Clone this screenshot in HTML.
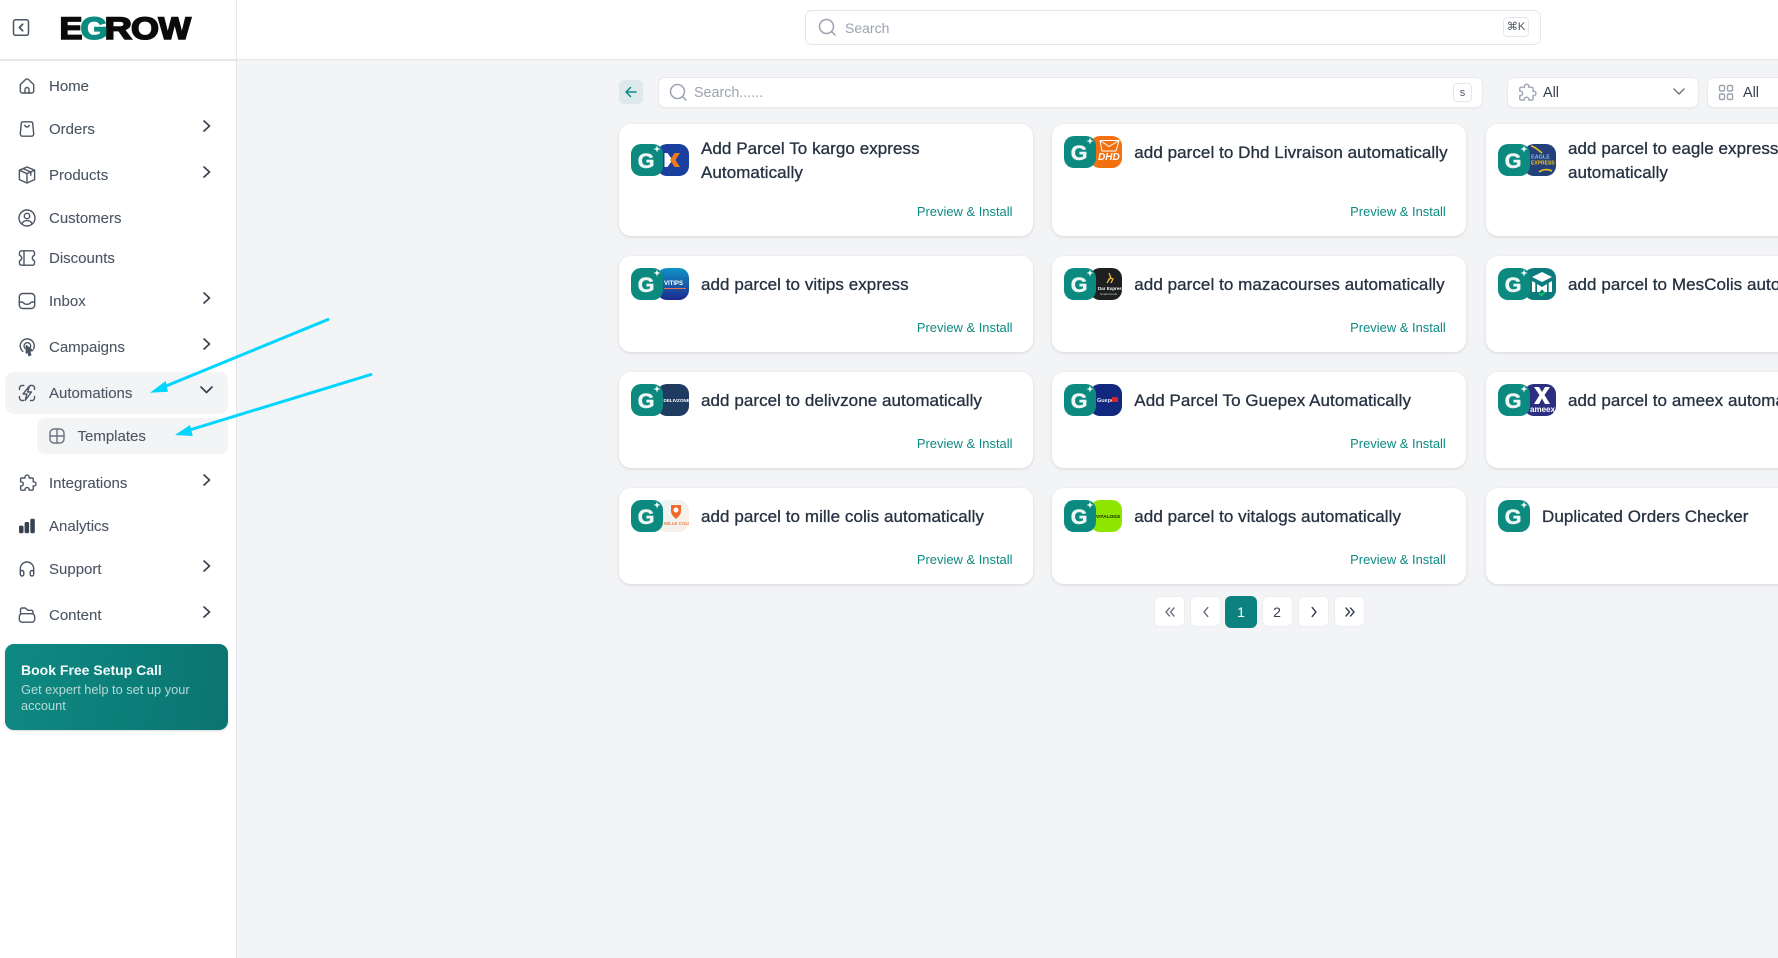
<!DOCTYPE html>
<html lang="en">
<head>
<meta charset="utf-8">
<title>Egrow Templates</title>
<style>
*{box-sizing:border-box;margin:0;padding:0}
html,body{width:1778px;height:958px;overflow:hidden;background:#f3f4f6;font-family:"Liberation Sans","DejaVu Sans",sans-serif}
.abs,.nav,.chev,.card,.pg,.ni{position:absolute}
#side{position:absolute;left:0;top:0;width:237px;height:958px;background:#fff;border-right:1.5px solid #e5e7eb}
#top{position:absolute;left:0;top:0;width:1778px;height:60px;background:#fff;border-bottom:1.5px solid #e5e7eb}
.nav{left:49px;height:20px;line-height:22px;font-size:15px;color:#4b5563;white-space:nowrap;-webkit-text-stroke:.1px #4b5563}
.ni{left:17px;width:20px;height:20px;fill:none;stroke:#4b5563;stroke-width:1.4;stroke-linecap:round;stroke-linejoin:round}
.chev{left:201px;width:12px;height:14px;fill:none;stroke:#374151;stroke-width:1.7;stroke-linecap:round;stroke-linejoin:round}
.box{position:absolute;background:#fff;border:1px solid #e8eaee;border-radius:7px;box-shadow:0 1px 1px rgba(0,0,0,.03)}
.kbd{position:absolute;background:#fff;border:1px solid #e5e7eb;border-radius:4px;text-align:center;color:#4b5563;font-size:11px}
.ph{position:absolute;color:#9ca3af;white-space:nowrap}
.card{width:413.5px;background:#fff;border-radius:12px;box-shadow:0 1px 3px rgba(0,0,0,.12)}
.card svg{position:absolute;left:12px}
.t{position:absolute;left:82px;line-height:24px;font-size:17px;letter-spacing:.06px;color:#263241;-webkit-text-stroke:.3px #263241;white-space:nowrap;margin-top:1px}
.p{position:absolute;right:20px;line-height:16px;font-size:12.95px;color:#0d8a82;white-space:nowrap;margin-top:1px}
.pg{top:596px;width:31px;height:31px;background:#fff;border:1px solid #eceef1;border-radius:6px;text-align:center;line-height:31px;font-size:14px;color:#374151}
.pg svg{position:absolute;left:8px;top:8px;width:14px;height:14px;fill:none;stroke-width:1.4;stroke-linecap:round;stroke-linejoin:round}
.g{font-family:"Liberation Sans",sans-serif;font-weight:700;font-size:21.5px;fill:#eef7f6;stroke:#eef7f6;stroke-width:.5}
.s{font-family:"Liberation Sans",sans-serif;font-weight:700}
.lg{font-family:"Liberation Sans",sans-serif;font-weight:700;font-size:31.3px;stroke-width:1.6;stroke-linejoin:miter}
</style>
</head>
<body>

<div id="top"></div>
<div id="side"></div>
<div class="abs" style="left:0;top:59px;width:237px;height:1.5px;background:#e5e7eb"></div>

<!-- collapse icon -->
<svg class="abs" style="left:12px;top:18px" width="18" height="19" viewBox="0 0 18 19" fill="none" stroke="#4b5563" stroke-width="1.5" stroke-linecap="round" stroke-linejoin="round"><rect x="1.5" y="1.8" width="15" height="15.5" rx="2"/><path d="M10.6 6.3 7.400 9.500l3.200 3.200" stroke-width="1.800"/></svg>

<!-- logo -->
<svg class="abs" style="left:50px;top:8px" width="160" height="40" viewBox="50 8 160 40">
<text class="lg" x="59.5" y="39.2" textLength="23" lengthAdjust="spacingAndGlyphs" fill="#0a0a0a" stroke="#0a0a0a">E</text>
<text class="lg" x="104.5" y="39.2" textLength="27.500" lengthAdjust="spacingAndGlyphs" fill="#0a0a0a" stroke="#0a0a0a">R</text>
<text class="lg" x="131" y="39.2" textLength="28" lengthAdjust="spacingAndGlyphs" fill="#0a0a0a" stroke="#0a0a0a">O</text>
<text class="lg" x="158.500" y="39.2" textLength="32.500" lengthAdjust="spacingAndGlyphs" fill="#0a0a0a" stroke="#0a0a0a">W</text>
<text class="lg" x="80.500" y="39.2" textLength="27" lengthAdjust="spacingAndGlyphs" fill="#0b8a80" stroke="#0b8a80">G</text>
</svg>

<!-- sidebar highlights -->
<div class="abs" style="left:5px;top:372px;width:223px;height:42px;background:#f3f4f6;border-radius:9px"></div>
<div class="abs" style="left:37px;top:418px;width:191px;height:36px;background:#f3f4f6;border-radius:8px"></div>

<!-- nav icons -->
<svg class="ni" style="top:76px" viewBox="0 0 20 20"><path d="M3.300 8.600 8.400 3.600a2.300 2.300 0 0 1 3.200 0l5.100 5V15a2 2 0 0 1-2 2H5.300a2 2 0 0 1-2-2Z"/><path d="M8 17v-3.500a2 2 0 0 1 4 0V17"/></svg>
<svg class="ni" style="top:119px" viewBox="0 0 20 20"><path d="M6 2.800h8a1.700 1.700 0 0 1 1.700 1.500l1 10.500a2.200 2.200 0 0 1-2.200 2.400h-9a2.200 2.200 0 0 1-2.200-2.400l1-10.500A1.700 1.700 0 0 1 6 2.800Z"/><path d="M7.800 6.300c.4 1.200 1.200 1.700 2.200 1.700s1.800-.5 2.200-1.700"/></svg>
<svg class="ni" style="top:165px" viewBox="0 0 20 20"><path d="M10 2 17.600 5.200V14.600L10 18 2.400 14.600V5.200Z"/><path d="M2.400 5.200 10 8.600l7.600-3.400M10 8.600V18M6.200 3.600l7.600 3.400v3.200"/></svg>
<svg class="ni" style="top:208px" viewBox="0 0 20 20"><circle cx="10" cy="10" r="8"/><circle cx="10" cy="8" r="2.700"/><path d="M5 15.800c.8-2.200 2.800-3.200 5-3.200s4.200 1 5 3.200"/></svg>
<svg class="ni" style="top:248px" viewBox="0 0 20 20"><path d="M4.500 2.800h11a2 2 0 0 1 2 2v2a.8.8 0 0 1-.5.7 2.700 2.700 0 0 0 0 5 .8.8 0 0 1 .5.7v2a2 2 0 0 1-2 2h-11a2 2 0 0 1-2-2v-2a.8.8 0 0 1 .5-.7 2.700 2.700 0 0 0 0-5 .8.8 0 0 1-.5-.7v-2a2 2 0 0 1 2-2Z"/><path d="M7 2.800V17.200"/></svg>
<svg class="ni" style="top:291px" viewBox="0 0 20 20"><rect x="2.300" y="2.500" width="15.400" height="15" rx="3.500"/><path d="M2.300 11H5c1.300 0 1.500 2.300 5 2.300s3.700-2.300 5-2.300h2.700"/></svg>
<svg class="ni" style="top:337px" viewBox="0 0 20 20"><path d="M5.800 14.300A7 7 0 1 1 16.500 12"/><path d="M8 11.300a3.300 3.300 0 1 1 5.300-.8"/><path d="M9.300 8.700 15.500 13.600 12.700 14 13.700 18 11.900 18.600 10.900 14.700 9.300 16Z" fill="#4b5563"/></svg>
<svg class="ni" style="top:383px" viewBox="0 0 20 20"><path d="M2.500 6.500V5a2.500 2.500 0 0 1 2.500-2.500h1.800M13.500 2.500H15A2.500 2.500 0 0 1 17.500 5v1.500M17.500 13.500V15a2.500 2.500 0 0 1-2.500 2.500h-1.500M6.500 17.500H5A2.500 2.500 0 0 1 2.500 15v-1.500"/><path d="M12.500 2.800 6 11h3.800L8.200 17.300 14.500 9H10.600Z"/></svg>
<svg class="ni" style="top:426px;left:47px;stroke:#6b7280" viewBox="0 0 20 20"><rect x="3" y="3" width="14" height="14" rx="4"/><path d="M10 3V17M3 10H17"/></svg>
<svg class="ni" style="top:473px" viewBox="0 0 20 20"><path d="M8 5V4.200a2.100 2.100 0 1 1 4.200 0V5H15a1.200 1.200 0 0 1 1.200 1.200V8.800h.7a2.100 2.100 0 1 1 0 4.200h-.7v3a1.200 1.200 0 0 1-1.200 1.200h-2.800v-.6a2.100 2.100 0 1 0-4.200 0v.6H4.800A1.200 1.200 0 0 1 3.600 16v-3h.6a2.100 2.100 0 1 0 0-4.200h-.6V6.200A1.200 1.200 0 0 1 4.800 5Z"/></svg>
<svg class="ni" style="top:516px;stroke:none;fill:#374151" viewBox="0 0 20 20"><rect x="2" y="9.600" width="4.500" height="7.600" rx="1.400"/><rect x="7.600" y="6" width="4.500" height="11.200" rx="1.400"/><rect x="13.300" y="2.700" width="4.500" height="14.500" rx="1.400"/></svg>
<svg class="ni" style="top:559px" viewBox="0 0 20 20"><path d="M3.300 12.500V9.700a6.700 6.700 0 0 1 13.400 0v2.800"/><rect x="3.300" y="11.500" width="3.500" height="5.500" rx="1.700"/><rect x="13.200" y="11.500" width="3.500" height="5.500" rx="1.700"/></svg>
<svg class="ni" style="top:605px" viewBox="0 0 20 20"><path d="M3.500 9V4.500A1.500 1.500 0 0 1 5 3h2.800c.8 0 1.200.3 1.700.9l.7.9c.3.4.6.5 1.100.5h3.200a1.500 1.500 0 0 1 1.500 1.500V9"/><rect x="2.300" y="8.700" width="15.400" height="8.500" rx="3"/></svg>

<!-- nav text -->
<div class="nav" style="top:76px">Home</div>
<div class="nav" style="top:119px">Orders</div>
<div class="nav" style="top:165px">Products</div>
<div class="nav" style="top:208px">Customers</div>
<div class="nav" style="top:248px">Discounts</div>
<div class="nav" style="top:291px">Inbox</div>
<div class="nav" style="top:337px">Campaigns</div>
<div class="nav" style="top:383px">Automations</div>
<div class="nav" style="top:426px;left:77.500px">Templates</div>
<div class="nav" style="top:473px">Integrations</div>
<div class="nav" style="top:516px">Analytics</div>
<div class="nav" style="top:559px">Support</div>
<div class="nav" style="top:605px">Content</div>

<!-- chevrons -->
<svg class="chev" style="top:119px" viewBox="0 0 12 14"><path d="M3 2l5.500 5L3 12"/></svg>
<svg class="chev" style="top:165px" viewBox="0 0 12 14"><path d="M3 2l5.500 5L3 12"/></svg>
<svg class="chev" style="top:291px" viewBox="0 0 12 14"><path d="M3 2l5.500 5L3 12"/></svg>
<svg class="chev" style="top:337px" viewBox="0 0 12 14"><path d="M3 2l5.500 5L3 12"/></svg>
<svg class="chev" style="top:473px" viewBox="0 0 12 14"><path d="M3 2l5.500 5L3 12"/></svg>
<svg class="chev" style="top:559px" viewBox="0 0 12 14"><path d="M3 2l5.500 5L3 12"/></svg>
<svg class="chev" style="top:605px" viewBox="0 0 12 14"><path d="M3 2l5.500 5L3 12"/></svg>
<svg class="chev" style="top:383px;left:200px;width:13px" viewBox="0 0 13 14"><path d="M1 4l5.500 5.500L12 4"/></svg>

<!-- CTA -->
<div class="abs" style="left:5px;top:644px;width:223px;height:86px;border-radius:9px;background:linear-gradient(100deg,#0e8a82,#0b7471);box-shadow:0 1px 2px rgba(0,0,0,.15)">
  <div class="abs" style="left:16px;top:17px;font-size:14px;line-height:18px;font-weight:700;color:#f4fbfa;white-space:nowrap">Book Free Setup Call</div>
  <div class="abs" style="left:16px;top:38px;width:195px;font-size:12.800px;line-height:16px;color:#b6dad7">Get expert help to set up your<br>account</div>
</div>

<!-- top search -->
<div class="box" style="left:805px;top:10px;width:736px;height:35px;border:1.500px solid #e5e7eb;box-shadow:none"></div>
<svg class="abs" style="left:817px;top:17px" width="20" height="20" viewBox="0 0 20 20" fill="none" stroke="#9ca3af" stroke-width="1.500" stroke-linecap="round"><circle cx="9.500" cy="9.500" r="7"/><path d="M14.500 14.500 18 18"/></svg>
<div class="ph" style="left:845px;top:19px;font-size:14px;line-height:19px">Search</div>
<div class="kbd" style="left:1503px;top:17px;width:26px;height:20px;line-height:18px">⌘K</div>

<!-- back button -->
<div class="abs" style="left:619px;top:80px;width:24px;height:24px;background:#dde9ea;border-radius:6px"></div>
<svg class="abs" style="left:623px;top:84px" width="16" height="16" viewBox="0 0 16 16" fill="none" stroke="#0d8a82" stroke-width="1.500" stroke-linecap="round" stroke-linejoin="round"><path d="M13 8H3.500M7.500 3.500 3 8l4.500 4.500"/></svg>

<!-- second search -->
<div class="box" style="left:658px;top:77px;width:825px;height:31px"></div>
<svg class="abs" style="left:668px;top:82px" width="20" height="20" viewBox="0 0 20 20" fill="none" stroke="#9ca3af" stroke-width="1.500" stroke-linecap="round"><circle cx="9.500" cy="9.500" r="7"/><path d="M14.500 14.500 18 18"/></svg>
<div class="ph" style="left:694px;top:83px;font-size:14.300px;line-height:20px">Search......</div>
<div class="kbd" style="left:1453px;top:83px;width:19px;height:19px;line-height:18px;font-size:11px">s</div>

<!-- selects -->
<div class="box" style="left:1507px;top:77px;width:192px;height:31px"></div>
<svg class="abs" style="left:1516px;top:82px" width="21" height="21" viewBox="0 0 20 20" fill="none" stroke="#9ca3af" stroke-width="1.300" stroke-linejoin="round"><path d="M8 5V4.200a2.100 2.100 0 1 1 4.200 0V5H15a1.200 1.200 0 0 1 1.200 1.200V8.800h.7a2.100 2.100 0 1 1 0 4.200h-.7v3a1.200 1.200 0 0 1-1.200 1.200h-2.800v-.6a2.100 2.100 0 1 0-4.200 0v.6H4.800A1.200 1.200 0 0 1 3.600 16v-3h.6a2.100 2.100 0 1 0 0-4.200h-.6V6.200A1.200 1.200 0 0 1 4.800 5Z"/></svg>
<div class="abs" style="left:1543px;top:83px;font-size:14.400px;line-height:20px;color:#374151">All</div>
<svg class="abs" style="left:1672px;top:86px" width="14" height="12" viewBox="0 0 14 12" fill="none" stroke="#6b7280" stroke-width="1.400" stroke-linecap="round" stroke-linejoin="round"><path d="M2 3l5 5 5-5"/></svg>
<div class="box" style="left:1707px;top:77px;width:90px;height:31px"></div>
<svg class="abs" style="left:1718px;top:84px" width="16" height="17" viewBox="0 0 16 17" fill="none" stroke="#9ca3af" stroke-width="1.400"><rect x="1.500" y="1.500" width="5" height="5.500" rx="1.200"/><rect x="9.500" y="1.500" width="5" height="5.500" rx="1.200"/><rect x="1.500" y="10" width="5" height="5.500" rx="1.200"/><rect x="9.500" y="10" width="5" height="5.500" rx="1.200"/></svg>
<div class="abs" style="left:1743px;top:83px;font-size:14.400px;line-height:20px;color:#374151">All</div>

<!-- ROW 1 -->
<div class="card" style="left:619px;top:124px;height:112px">
  <svg style="top:20px" width="58" height="32" viewBox="0 0 58 32"><rect x="26" width="32" height="32" rx="10" fill="#1a3f9e"/><path d="M33.500 9h3l5 7-5 7h-3Z" fill="#fff"/><path d="M49 9h-5.500L39 16l4.500 7H49l-4.500-7Z" fill="#ee7a1b"/><rect width="32" height="32" rx="10" fill="#0d8a80"/><text x="6.700" y="24" class="g">G</text><path d="M26 1.500l.9 2.600 2.600.9-2.600.9-.9 2.600-.9-2.600-2.600-.9 2.600-.9Z" fill="#fff"/></svg>
  <div class="t" style="top:12px">Add Parcel To kargo express<br>Automatically</div>
  <div class="p" style="top:79px">Preview &amp; Install</div>
</div>
<div class="card" style="left:1052.300px;top:124px;height:112px">
  <svg style="top:12px" width="58" height="32" viewBox="0 0 58 32"><rect x="26" width="32" height="32" rx="10" fill="#f2700f"/><path d="M36 4.500H55L52 15H38ZM36 4.500l9 6 10-6" fill="none" stroke="#fff" stroke-width="1"/><text x="34" y="24" class="s" font-size="10" font-style="italic" fill="#fff">DHD</text><rect width="32" height="32" rx="10" fill="#0d8a80"/><text x="6.700" y="24" class="g">G</text><path d="M26 1.500l.9 2.600 2.600.9-2.600.9-.9 2.600-.9-2.600-2.600-.9 2.600-.9Z" fill="#fff"/></svg>
  <div class="t" style="top:16px">add parcel to Dhd Livraison automatically</div>
  <div class="p" style="top:79px">Preview &amp; Install</div>
</div>
<div class="card" style="left:1486px;top:124px;height:112px">
  <svg style="top:20px" width="58" height="32" viewBox="0 0 58 32"><rect x="26" width="32" height="32" rx="10" fill="#234178"/><path d="M33 2c5 1 8 5 11 7M41 28c4-3 9-3 13-1" fill="none" stroke="#f2c21a" stroke-width="1.600"/><text x="33" y="14.500" class="s" font-size="5.500" fill="#8fb8e8">EAGLE</text><text x="33" y="20.500" class="s" font-size="5" fill="#f2c21a">EXPRESS</text><rect width="32" height="32" rx="10" fill="#0d8a80"/><text x="6.700" y="24" class="g">G</text><path d="M26 1.500l.9 2.600 2.600.9-2.600.9-.9 2.600-.9-2.600-2.600-.9 2.600-.9Z" fill="#fff"/></svg>
  <div class="t" style="top:12px">add parcel to eagle expresse<br>automatically</div>
</div>

<!-- ROW 2 -->
<div class="card" style="left:619px;top:256px;height:96px">
  <svg style="top:12px" width="58" height="32" viewBox="0 0 58 32"><defs><linearGradient id="v" x1="0" y1="0" x2="0" y2="1"><stop offset="0" stop-color="#0f93c8"/><stop offset="1" stop-color="#1d2a8e"/></linearGradient></defs><rect x="26" width="32" height="32" rx="10" fill="url(#v)"/><text x="33" y="17" class="s" font-size="6" fill="#fff">VITIPS</text><rect x="33" y="20" width="22" height="1" fill="#e8734a"/><rect width="32" height="32" rx="10" fill="#0d8a80"/><text x="6.700" y="24" class="g">G</text><path d="M26 1.500l.9 2.600 2.600.9-2.600.9-.9 2.600-.9-2.600-2.600-.9 2.600-.9Z" fill="#fff"/></svg>
  <div class="t" style="top:16px">add parcel to vitips express</div>
  <div class="p" style="top:63px">Preview &amp; Install</div>
</div>
<div class="card" style="left:1052.300px;top:256px;height:96px">
  <svg style="top:12px" width="58" height="32" viewBox="0 0 58 32"><rect x="26" width="32" height="32" rx="10" fill="#1d1f20"/><path d="M43 15l3-5 3 1-2 4M45 5l2 5-3 2" fill="none" stroke="#e8b93a" stroke-width="1.300"/><text x="34" y="22" class="s" font-size="4.500" fill="#fff">Dar Express</text><text x="36" y="27" font-family="Liberation Sans" font-size="3" fill="#d0d0d0">Small Goods</text><rect width="32" height="32" rx="10" fill="#0d8a80"/><text x="6.700" y="24" class="g">G</text><path d="M26 1.500l.9 2.600 2.600.9-2.600.9-.9 2.600-.9-2.600-2.600-.9 2.600-.9Z" fill="#fff"/></svg>
  <div class="t" style="top:16px">add parcel to mazacourses automatically</div>
  <div class="p" style="top:63px">Preview &amp; Install</div>
</div>
<div class="card" style="left:1486px;top:256px;height:96px">
  <svg style="top:12px" width="58" height="32" viewBox="0 0 58 32"><rect x="26" width="32" height="32" rx="10" fill="#0b7b7b"/><path d="M44 4 54 9 44 14 34 9ZM34 13l3.300 1.700V24H34ZM54 13l-3.300 1.700V24H54ZM39 16l5 3 5-3V24H46.500L44 21.500 41.500 24H39Z" fill="#fff"/><path d="M41 25l2.500 2.500L47 24" fill="none" stroke="#25c76a" stroke-width="1.500"/><rect width="32" height="32" rx="10" fill="#0d8a80"/><text x="6.700" y="24" class="g">G</text><path d="M26 1.500l.9 2.600 2.600.9-2.600.9-.9 2.600-.9-2.600-2.600-.9 2.600-.9Z" fill="#fff"/></svg>
  <div class="t" style="top:16px">add parcel to MesColis automatically</div>
</div>

<!-- ROW 3 -->
<div class="card" style="left:619px;top:372px;height:96px">
  <svg style="top:12px" width="58" height="32" viewBox="0 0 58 32"><rect x="26" width="32" height="32" rx="10" fill="#1f3b61"/><text x="32.500" y="18" class="s" font-size="4.600" fill="#fff">DELIVZONE</text><rect width="32" height="32" rx="10" fill="#0d8a80"/><text x="6.700" y="24" class="g">G</text><path d="M26 1.500l.9 2.600 2.600.9-2.600.9-.9 2.600-.9-2.600-2.600-.9 2.600-.9Z" fill="#fff"/></svg>
  <div class="t" style="top:16px">add parcel to delivzone automatically</div>
  <div class="p" style="top:63px">Preview &amp; Install</div>
</div>
<div class="card" style="left:1052.300px;top:372px;height:96px">
  <svg style="top:12px" width="58" height="32" viewBox="0 0 58 32"><rect x="26" width="32" height="32" rx="10" fill="#12287f"/><text x="33" y="18" class="s" font-size="5.500" fill="#e8e8f0">Guepex</text><rect x="48" y="13" width="6" height="5" fill="#d8262c"/><rect width="32" height="32" rx="10" fill="#0d8a80"/><text x="6.700" y="24" class="g">G</text><path d="M26 1.500l.9 2.600 2.600.9-2.600.9-.9 2.600-.9-2.600-2.600-.9 2.600-.9Z" fill="#fff"/></svg>
  <div class="t" style="top:16px">Add Parcel To Guepex Automatically</div>
  <div class="p" style="top:63px">Preview &amp; Install</div>
</div>
<div class="card" style="left:1486px;top:372px;height:96px">
  <svg style="top:12px" width="58" height="32" viewBox="0 0 58 32"><rect x="26" width="32" height="32" rx="10" fill="#2c2f80"/><path d="M36 3H41L44 8 47 3H52L46.500 11 52 20H47L44 14.500 41 20H36L41.500 11Z" fill="#fff"/><text x="32" y="28" class="s" font-size="8" fill="#fff">ameex</text><rect width="32" height="32" rx="10" fill="#0d8a80"/><text x="6.700" y="24" class="g">G</text><path d="M26 1.500l.9 2.600 2.600.9-2.600.9-.9 2.600-.9-2.600-2.600-.9 2.600-.9Z" fill="#fff"/></svg>
  <div class="t" style="top:16px">add parcel to ameex automatically</div>
</div>

<!-- ROW 4 -->
<div class="card" style="left:619px;top:488px;height:96px">
  <svg style="top:12px" width="58" height="32" viewBox="0 0 58 32"><defs><linearGradient id="m" x1="0" y1="0" x2="1" y2="1"><stop offset="0" stop-color="#eaf6f8"/><stop offset="1" stop-color="#fdeee4"/></linearGradient></defs><rect x="26" width="32" height="32" rx="10" fill="url(#m)"/><path d="M40 5h10v6c0 4-3 6-5 8-2-2-5-4-5-8Z" fill="#ef6a2a"/><circle cx="45" cy="10" r="2.500" fill="#fff"/><text x="33" y="25" class="s" font-size="4.500" fill="#e9824f">MILLE COLIS</text><rect width="32" height="32" rx="10" fill="#0d8a80"/><text x="6.700" y="24" class="g">G</text><path d="M26 1.500l.9 2.600 2.600.9-2.600.9-.9 2.600-.9-2.600-2.600-.9 2.600-.9Z" fill="#fff"/></svg>
  <div class="t" style="top:16px">add parcel to mille colis automatically</div>
  <div class="p" style="top:63px">Preview &amp; Install</div>
</div>
<div class="card" style="left:1052.300px;top:488px;height:96px">
  <svg style="top:12px" width="58" height="32" viewBox="0 0 58 32"><rect x="26" width="32" height="32" rx="10" fill="#8ee600"/><text x="32" y="18" class="s" font-size="4.800" fill="#102000">VITALOGS</text><rect width="32" height="32" rx="10" fill="#0d8a80"/><text x="6.700" y="24" class="g">G</text><path d="M26 1.500l.9 2.600 2.600.9-2.600.9-.9 2.600-.9-2.600-2.600-.9 2.600-.9Z" fill="#fff"/></svg>
  <div class="t" style="top:16px">add parcel to vitalogs automatically</div>
  <div class="p" style="top:63px">Preview &amp; Install</div>
</div>
<div class="card" style="left:1486px;top:488px;height:96px">
  <svg style="top:12px" width="32" height="32" viewBox="0 0 32 32"><rect width="32" height="32" rx="10" fill="#0d8a80"/><text x="6.700" y="24" class="g">G</text><path d="M26 1.500l.9 2.600 2.600.9-2.600.9-.9 2.600-.9-2.600-2.600-.9 2.600-.9Z" fill="#fff"/></svg>
  <div class="t" style="top:16px;left:56px">Duplicated Orders Checker</div>
</div>

<!-- pagination -->
<div class="pg" style="left:1153.500px"><svg viewBox="0 0 14 14" stroke="#6b7280"><path d="M6.500 3 3 7l3.500 4M11 3 7.500 7l3.500 4"/></svg></div>
<div class="pg" style="left:1189.500px"><svg viewBox="0 0 14 14" stroke="#6b7280"><path d="M8.800 2.500 5 7l3.800 4.500"/></svg></div>
<div class="pg" style="left:1225px;width:32px;height:32px;background:#0d8080;border:0;line-height:33px;color:#fff">1</div>
<div class="pg" style="left:1261.500px">2</div>
<div class="pg" style="left:1297.500px"><svg viewBox="0 0 14 14" stroke="#374151"><path d="M5.200 2.500 9 7l-3.800 4.500"/></svg></div>
<div class="pg" style="left:1333.500px"><svg viewBox="0 0 14 14" stroke="#374151"><path d="M3 3l3.500 4L3 11M7.500 3 11 7l-3.500 4"/></svg></div>

<!-- annotation arrows -->
<svg class="abs" style="left:0;top:0" width="1778" height="958" viewBox="0 0 1778 958">
  <path d="M328 319.500 160 388.500" stroke="#00d5ff" stroke-width="3" fill="none" stroke-linecap="round"/>
  <path d="M150 392.700 165.700 381 168 391.700Z" fill="#00d5ff"/>
  <path d="M371 374.500 183 432" stroke="#00d5ff" stroke-width="3" fill="none" stroke-linecap="round"/>
  <path d="M175 435 190 425 192.700 436Z" fill="#00d5ff"/>
</svg>

</body>
</html>
